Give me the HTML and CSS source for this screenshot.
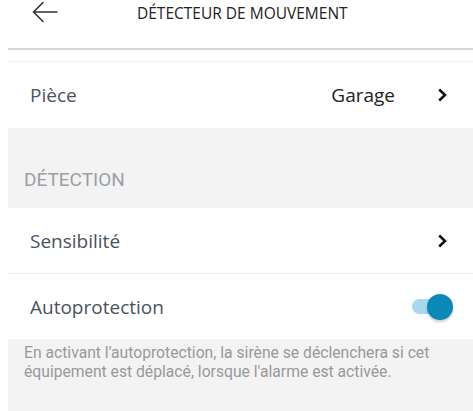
FILE: index.html
```html
<!DOCTYPE html>
<html lang="fr">
<head>
<meta charset="utf-8">
<link rel="stylesheet" href="styles.css">
</head>
<body>
<div class="app">
  <header class="topbar">
    <svg class="back" width="26" height="22" viewBox="0 0 26 22"><path d="M25 11H2M11 1.5L1.5 11L11 20.5" fill="none" stroke="#333" stroke-width="1.6" stroke-linecap="round" stroke-linejoin="round"/></svg>
    <h1 class="title">DÉTECTEUR DE MOUVEMENT</h1>
  </header>
  <div class="divider"></div>
  <div class="spacer"></div>
  <div class="row row-piece">
    <span class="label">Pièce</span>
    <span class="value">Garage</span>
    <svg class="chev" width="11" height="14" viewBox="0 0 11 14"><path d="M2.2 1.5L8 7L2.2 12.5" fill="none" stroke="#111" stroke-width="2.5"/></svg>
  </div>
  <div class="section">DÉTECTION</div>
  <div class="row row-sens">
    <span class="label">Sensibilité</span>
    <svg class="chev" width="11" height="14" viewBox="0 0 11 14"><path d="M2.2 1.5L8 7L2.2 12.5" fill="none" stroke="#111" stroke-width="2.5"/></svg>
  </div>
  <div class="row row-auto">
    <span class="label">Autoprotection</span>
    <span class="toggle"><span class="track"></span><span class="thumb"></span></span>
  </div>
  <p class="desc">En activant l'autoprotection, la sirène se déclenchera si cet équipement est déplacé, lorsque l'alarme est activée.</p>
</div>
</body>
</html>
```
FILE: styles.css
```css
html, body {
  margin: 0;
  padding: 0;
  background: #fff;
  overflow: hidden;
}
body {
  padding-left: 8px;
  height: 411px;
}
.app {
  font-family: "Open Sans", "Noto Sans", sans-serif;
  height: 411px;
  display: flex;
  flex-direction: column;
}
.topbar {
  height: 48px;
  display: flex;
  align-items: center;
  position: relative;
  background: #fff;
  margin-left: -8px;
}
.back {
  position: absolute;
  left: 32px;
  top: 1px;
}
.title {
  margin: 0 0 0 137px;
  font-size: 15.5px;
  font-weight: 400;
  color: #222;
  position: relative;
  top: -11px;
}
.divider {
  height: 2px;
  background: #d5d5da;
}
.spacer {
  height: 11px;
  background: #fff;
}
.row {
  display: flex;
  align-items: center;
  background: #fff;
  padding: 0 25px 0 22px;
}
.row-piece {
  height: 66px;
  border-top: 1px solid #f0f0f0;
}
.row-sens {
  height: 65px;
  border-bottom: 1px solid #efefef;
}
.row-auto {
  height: 65px;
}
.label {
  flex: 1;
  font-size: 19px;
  color: #4a535e;
}
.value {
  font-size: 19px;
  color: #222;
  margin-right: 42px;
}
.chev {
  display: block;
}
.section {
  height: 80px;
  background: #f3f3f3;
  padding: 40px 0 0 16px;
  box-sizing: border-box;
  font-family: "Roboto", sans-serif;
  font-size: 19px;
  line-height: 24px;
  color: #9aa0a6;
}
.toggle {
  position: relative;
  width: 41px;
  height: 26px;
  margin-right: -5px;
}
.track {
  position: absolute;
  left: 0;
  top: 5px;
  width: 36px;
  height: 15px;
  border-radius: 8px;
  background: #a9d9ec;
}
.thumb {
  position: absolute;
  right: 0;
  top: 0;
  width: 26px;
  height: 26px;
  border-radius: 50%;
  background: #0a88b8;
  box-shadow: 0 2px 3px rgba(0,0,0,0.22);
}
.desc {
  flex: 1;
  margin: 0;
  background: #f3f3f3;
  padding: 5px 20px 0 16px;
  font-family: "Roboto", sans-serif;
  font-size: 15.7px;
  line-height: 18.5px;
  color: #999;
}
```
